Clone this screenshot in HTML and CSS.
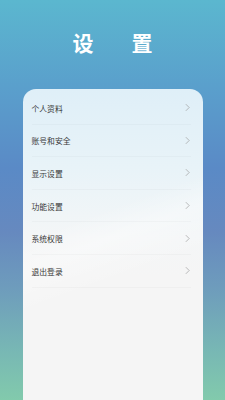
FILE: index.html
```html
<!DOCTYPE html>
<html>
<head>
<meta charset="utf-8">
<title>设置</title>
<link rel="stylesheet" href="styles.css">
</head>
<body>
<div class="page">
	<div class="title">设<span class="gap"></span>置</div>
	<div class="card">
		<ul class="menu">
			<li><span>个人资料</span><svg class="arrow" viewBox="0 0 6 10"><path d="M1 1 L5 5 L1 9"/></svg></li>
			<li><span>账号和安全</span><svg class="arrow" viewBox="0 0 6 10"><path d="M1 1 L5 5 L1 9"/></svg></li>
			<li><span>显示设置</span><svg class="arrow" viewBox="0 0 6 10"><path d="M1 1 L5 5 L1 9"/></svg></li>
			<li><span>功能设置</span><svg class="arrow" viewBox="0 0 6 10"><path d="M1 1 L5 5 L1 9"/></svg></li>
			<li><span>系统权限</span><svg class="arrow" viewBox="0 0 6 10"><path d="M1 1 L5 5 L1 9"/></svg></li>
			<li><span>退出登录</span><svg class="arrow" viewBox="0 0 6 10"><path d="M1 1 L5 5 L1 9"/></svg></li>
		</ul>
	</div>
</div>
</body>
</html>
```
FILE: styles.css
```css
*{margin:0;padding:0;box-sizing:border-box;}
html,body{width:225px;height:400px;overflow:hidden;}
body{font-family:"Noto Sans CJK SC","Noto Sans",sans-serif;}
.page{width:225px;height:400px;display:flex;flex-direction:column;align-items:center;
	background:linear-gradient(180deg,#5bb7cf 0%,#5a9fcc 22%,#5a8ac6 42%,#6689bf 58%,#6e9cbc 72%,#78b8b4 88%,#82caac 100%);}
.title{margin-top:27px;height:30px;line-height:30px;color:#fff;font-size:21px;font-weight:bold;display:flex;align-items:center;}
.gap{display:inline-block;width:38px;}
.card{margin-top:32px;width:180px;flex:1;border-radius:13px 13px 0 0;
	background:linear-gradient(160deg,rgba(255,255,255,0) 40%,rgba(255,255,255,0.35) 48%,rgba(255,255,255,0) 60%),
		linear-gradient(180deg,#dfeff8 0%,#e8f3f8 25%,#f4f6f7 48%,#f5f5f5 60%,#f5f5f5 100%);
	padding:3px 12px 0 9px;}
.menu{list-style-type:none;}
.menu li{height:32.6px;display:flex;align-items:center;justify-content:space-between;
	border-bottom:1px solid rgba(0,0,0,0.025);font-size:7.8px;color:#383838;}
.menu li span{padding-top:1px;}
.arrow{width:5px;height:9px;fill:none;stroke:#9a9a9a;stroke-width:0.8;margin-right:1px;}
```
